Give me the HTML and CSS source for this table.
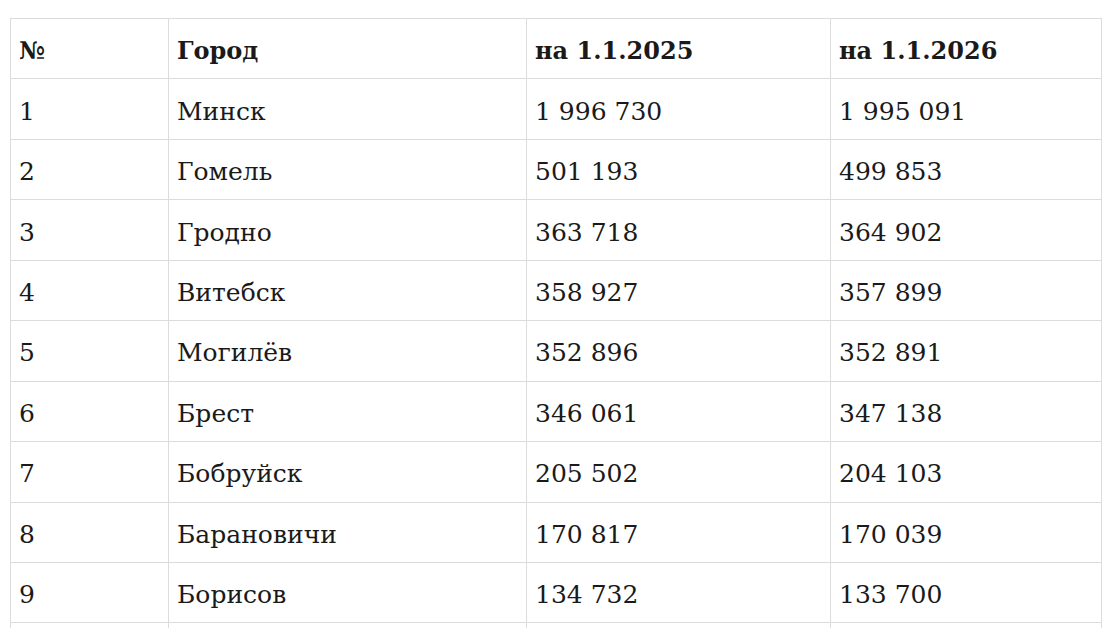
FILE: index.html
```html
<!DOCTYPE html>
<html lang="ru">
<head>
<meta charset="utf-8">
<link rel="stylesheet" href="styles.css">
</head>
<body>
<div class="wrap">
<table class="tbl">
<colgroup>
<col class="c1"><col class="c2"><col class="c3"><col class="c4">
</colgroup>
<thead>
<tr><th>№</th><th>Город</th><th>на 1.1.2025</th><th>на 1.1.2026</th></tr>
</thead>
<tbody>
<tr><td>1</td><td>Минск</td><td>1 996 730</td><td>1 995 091</td></tr>
<tr><td>2</td><td>Гомель</td><td>501 193</td><td>499 853</td></tr>
<tr><td>3</td><td>Гродно</td><td>363 718</td><td>364 902</td></tr>
<tr><td>4</td><td>Витебск</td><td>358 927</td><td>357 899</td></tr>
<tr><td>5</td><td>Могилёв</td><td>352 896</td><td>352 891</td></tr>
<tr><td>6</td><td>Брест</td><td>346 061</td><td>347 138</td></tr>
<tr><td>7</td><td>Бобруйск</td><td>205 502</td><td>204 103</td></tr>
<tr><td>8</td><td>Барановичи</td><td>170 817</td><td>170 039</td></tr>
<tr><td>9</td><td>Борисов</td><td>134 732</td><td>133 700</td></tr>
<tr><td>&nbsp;</td><td>&nbsp;</td><td>&nbsp;</td><td>&nbsp;</td></tr>
</tbody>
</table>
</div>
</body>
</html>
```
FILE: styles.css
```css
html, body {
  margin: 0;
  padding: 0;
  background: #fff;
  overflow: hidden;
}
.wrap {
  padding: 18px 0 0 10px;
}
.tbl {
  border-collapse: collapse;
  table-layout: fixed;
  width: 1091px;
  font-family: "DejaVu Serif", "Liberation Serif", serif;
  color: #1a1a1a;
}
.c1 { width: 158px; }
.c2 { width: 358px; }
.c3 { width: 304px; }
.c4 { width: 271px; }
.tbl th, .tbl td {
  border: 1px solid #dcdcdc;
  height: 60.44px;
  box-sizing: border-box;
  padding: 4px 8px 0 8px;
  text-align: left;
  vertical-align: middle;
  font-size: 25px;
  white-space: nowrap;
}
.tbl th {
  font-weight: bold;
  font-size: 24px;
}
.tbl td {
  font-weight: normal;
}
```
